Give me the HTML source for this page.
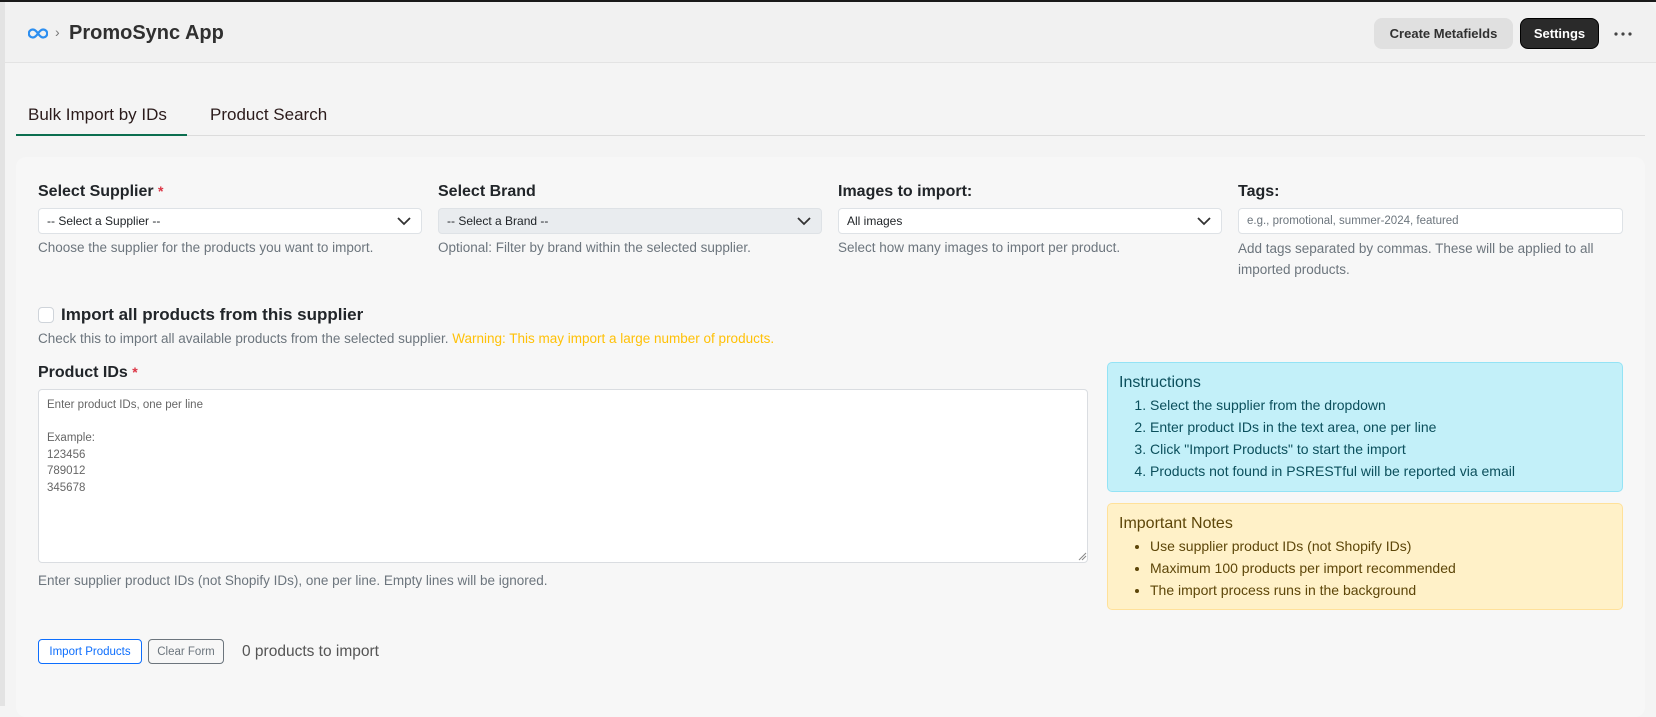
<!DOCTYPE html>
<html><head><meta charset="utf-8"><style>
*{box-sizing:border-box;margin:0;padding:0}
body{width:1656px;height:706px;overflow:hidden;background:#f4f4f4;font-family:"Liberation Sans",Arial,sans-serif;position:relative;color:#212529}
.abs{position:absolute}
.strip{left:0;top:0;width:5px;height:706px;background:#e3e3e3}
.topline{left:0;top:0;width:1656px;height:2px;background:#1a1a1a}
.header{left:5px;top:2px;width:1651px;height:61px;background:#f1f1f1;border-bottom:1px solid #e3e3e3;border-top-right-radius:12px}
.btn{position:absolute;height:31px;border-radius:8px;font-size:13px;font-weight:bold;display:flex;align-items:center;justify-content:center}
.lbl{font-size:16px;font-weight:bold;color:#212529}
.help{font-size:13.5px;color:#6c757d}
.sel{height:26px;border:1px solid #dee2e6;border-radius:4px;background:#fff;font-size:12px;padding-left:8px;display:flex;align-items:center;color:#212529}
.chev{position:absolute;right:10px;top:7px}
.req{color:#dc3545;font-size:14px}
.box{border-radius:5px;padding:10px 11px}
.box h4{font-weight:normal;font-size:16px;margin-top:1px;margin-bottom:2px}
.box li{font-size:14px;line-height:22px}
</style></head><body>
<div class="abs strip"></div>
<div class="abs header">
  <svg class="abs" style="left:23px;top:26px" width="20" height="11" viewBox="0 0 20 11"><path d="M10 5.5C8 2.5 6.5 1.5 4.8 1.5A4 4 0 0 0 4.8 9.5C6.5 9.5 8 8.5 10 5.5C12 2.5 13.5 1.5 15.2 1.5A4 4 0 0 1 15.2 9.5C13.5 9.5 12 8.5 10 5.5Z" fill="none" stroke="#2c8ef0" stroke-width="2.2"/></svg>
  <div class="abs" style="left:50px;top:22px;font-size:14px;color:#777">›</div>
  <div class="abs" style="left:64px;top:20px;font-size:20px;font-weight:bold;color:#303030">PromoSync App</div>
  <div class="btn" style="left:1369px;top:16px;width:139px;background:#e0e0e0;color:#303030">Create Metafields</div>
  <div class="btn" style="left:1515px;top:16px;width:79px;background:#2a2a2a;color:#fff;border:1px solid #000">Settings</div>
  <svg class="abs" style="left:1609px;top:30px" width="18" height="4"><circle cx="2" cy="2" r="1.6" fill="#444"/><circle cx="9" cy="2" r="1.6" fill="#444"/><circle cx="16" cy="2" r="1.6" fill="#444"/></svg>
</div>
<div class="abs topline"></div>

<div class="abs" style="left:28px;top:105px;font-size:17px;color:#2b1b1b">Bulk Import by IDs</div>
<div class="abs" style="left:210px;top:105px;font-size:17px;color:#2b1b1b">Product Search</div>
<div class="abs" style="left:16px;top:135px;width:1629px;height:1px;background:#dcdcdc"></div>
<div class="abs" style="left:16px;top:134px;width:171px;height:2px;background:#0b6e4f"></div>

<div class="abs" style="left:16px;top:157px;width:1629px;height:560px;background:#f7f7f7;border-radius:10px"></div>

<div class="abs lbl" style="left:38px;top:183px">Select Supplier <span class="req">*</span></div>
<div class="abs sel" style="left:38px;top:208px;width:384px">-- Select a Supplier --<svg class="chev" width="14" height="10"><path d="M1 2l6 6 6-6" fill="none" stroke="#333" stroke-width="1.8"/></svg></div>
<div class="abs help" style="left:38px;top:240px">Choose the supplier for the products you want to import.</div>

<div class="abs lbl" style="left:438px;top:183px">Select Brand</div>
<div class="abs sel" style="left:438px;top:208px;width:384px;background:#e9ecef">-- Select a Brand --<svg class="chev" width="14" height="10"><path d="M1 2l6 6 6-6" fill="none" stroke="#333" stroke-width="1.8"/></svg></div>
<div class="abs help" style="left:438px;top:240px">Optional: Filter by brand within the selected supplier.</div>

<div class="abs lbl" style="left:838px;top:183px">Images to import:</div>
<div class="abs sel" style="left:838px;top:208px;width:384px">All images<svg class="chev" width="14" height="10"><path d="M1 2l6 6 6-6" fill="none" stroke="#333" stroke-width="1.8"/></svg></div>
<div class="abs help" style="left:838px;top:240px">Select how many images to import per product.</div>

<div class="abs lbl" style="left:1238px;top:183px">Tags:</div>
<div class="abs sel" style="left:1238px;top:208px;width:385px;color:#6c757d;font-size:11.5px">e.g., promotional, summer-2024, featured</div>
<div class="abs help" style="left:1238px;top:238px;width:380px;line-height:21px">Add tags separated by commas. These will be applied to all imported products.</div>

<div class="abs" style="left:38px;top:307px;width:16px;height:16px;border:1px solid #cfd4da;border-radius:4px;background:#fff"></div>
<div class="abs" style="left:61px;top:305px;font-size:17px;font-weight:bold">Import all products from this supplier</div>
<div class="abs help" style="left:38px;top:331px">Check this to import all available products from the selected supplier. <span style="color:#ffc107">Warning: This may import a large number of products.</span></div>

<div class="abs lbl" style="left:38px;top:364px">Product IDs <span class="req">*</span></div>
<div class="abs" style="left:38px;top:389px;width:1050px;height:174px;background:#fff;border:1px solid #dadde1;border-radius:4px;padding:7px 8px;font-size:11.5px;line-height:16.5px;color:#666;white-space:pre">Enter product IDs, one per line

Example:
123456
789012
345678</div>
<svg class="abs" style="left:1078px;top:552px" width="9" height="9"><path d="M1 8L8 1M4 8L8 4" stroke="#888" stroke-width="1"/></svg>
<div class="abs help" style="left:38px;top:573px">Enter supplier product IDs (not Shopify IDs), one per line. Empty lines will be ignored.</div>

<div class="abs box" style="left:1107px;top:362px;width:516px;height:130px;background:#c3f0f9;border:1px solid #94e3f5;color:#0b4f5c">
<h4>Instructions</h4>
<ol style="padding-left:31px"><li>Select the supplier from the dropdown</li><li>Enter product IDs in the text area, one per line</li><li>Click "Import Products" to start the import</li><li>Products not found in PSRESTful will be reported via email</li></ol></div>

<div class="abs box" style="left:1107px;top:503px;width:516px;height:107px;background:#fff1c8;border:1px solid #ffe19a;color:#5d4609">
<h4>Important Notes</h4>
<ul style="padding-left:31px"><li>Use supplier product IDs (not Shopify IDs)</li><li>Maximum 100 products per import recommended</li><li>The import process runs in the background</li></ul></div>

<div class="abs" style="left:38px;top:639px;width:104px;height:25px;border:1px solid #0d6efd;border-radius:4px;color:#0d6efd;font-size:11.5px;display:flex;align-items:center;justify-content:center;background:#fff">Import Products</div>
<div class="abs" style="left:148px;top:639px;width:76px;height:25px;border:1px solid #6c757d;border-radius:4px;color:#6c757d;font-size:11.5px;display:flex;align-items:center;justify-content:center">Clear Form</div>
<div class="abs" style="left:242px;top:643px;font-size:15.5px;color:#555">0 products to import</div>
</body></html>
